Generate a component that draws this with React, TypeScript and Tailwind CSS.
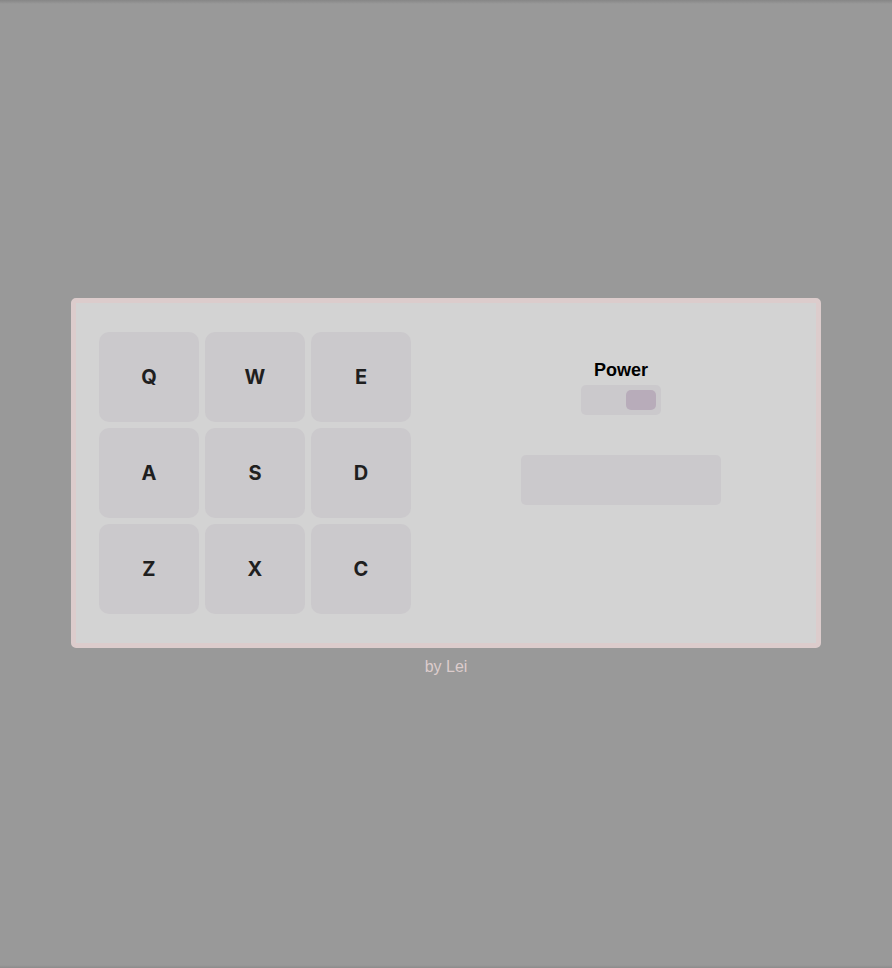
import { useState } from "react";

const pads = [
  { key: "Q", sound: "Heater 1" },
  { key: "W", sound: "Heater 2" },
  { key: "E", sound: "Heater 3" },
  { key: "A", sound: "Heater 4" },
  { key: "S", sound: "Clap" },
  { key: "D", sound: "Open HH" },
  { key: "Z", sound: "Kick n' Hat" },
  { key: "X", sound: "Kick" },
  { key: "C", sound: "Closed HH" },
];

export default function App() {
  const [power, setPower] = useState(true);
  const [display, setDisplay] = useState("");

  return (
    <main className="flex min-h-screen flex-col items-center justify-center bg-[linear-gradient(to_bottom,#868686,#999999_4px,#999999_calc(100%-3px),#8c8c8c)] pt-2 font-['Liberation_Sans',Arial,sans-serif]">
      <section className="flex w-full max-w-[750px] flex-wrap rounded-[5px] border-5 border-[#dccccc] bg-[#d3d3d3] py-[29px] pl-[23px]">
        <div className="grid grid-cols-3 gap-1.5">
          {pads.map((pad) => (
            <button
              key={pad.key}
              type="button"
              onClick={() => power && setDisplay(pad.sound)}
              className="h-[90px] w-[100px] rounded-[10px] bg-[#cbc9cc] font-['Inter','Liberation_Sans',sans-serif] text-xl font-bold text-[#1f1f1f]"
            >
              {pad.key}
            </button>
          ))}
        </div>
        <div className="ml-[15px] flex flex-1 flex-col items-center pt-[26px]">
          <label htmlFor="power" className="pb-0.5 text-lg leading-[25px] font-bold text-black">
            Power
          </label>
          <span className="relative flex h-[30px] w-20">
            <input
              id="power"
              type="checkbox"
              checked={power}
              onChange={(event) => {
                setPower(event.target.checked);
                setDisplay("");
              }}
              className="peer h-full w-full cursor-pointer appearance-none rounded-[5px] bg-[#cbc9cc]"
            />
            <span className="pointer-events-none absolute top-[5px] left-[5px] h-5 w-[30px] rounded-[5px] bg-[#b8acba] peer-checked:left-[45px]" />
          </span>
          <output className="mt-10 flex h-[50px] w-[200px] items-center justify-center rounded-[5px] bg-[#cbc9cc]">
            {display}
          </output>
        </div>
      </section>
      <footer className="pt-2 text-base leading-[22px] text-[#dccccc]">by Lei</footer>
    </main>
  );
}
